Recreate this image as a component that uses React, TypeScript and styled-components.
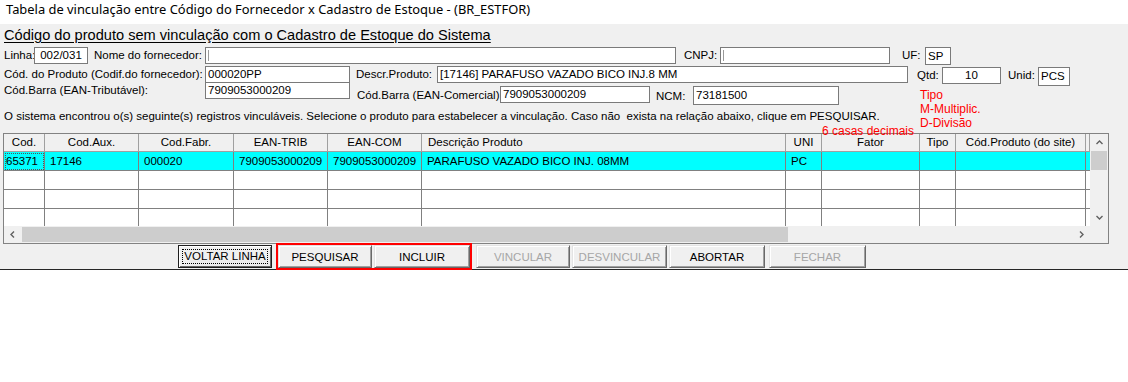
import styled, { createGlobalStyle } from 'styled-components';

const GlobalStyle = createGlobalStyle`
  html, body {
    margin: 0;
    padding: 0;
    background: #ffffff;
  }
  body {
    font-family: "Liberation Sans", Arial, sans-serif;
    color: #000;
  }
`;

const Window = styled.div`
  width: 1128px;
  display: flex;
  flex-direction: column;
`;

const TitleBar = styled.div`
  height: 24px;
  padding-left: 6px;
  font-family: "Noto Sans", "Liberation Sans", sans-serif;
  font-size: 12.9px;
  line-height: 19px;
  background: #ffffff;
`;

const Panel = styled.div`
  position: relative;
  height: 245px;
  background: #f0f0f0;
  border-bottom: 1px solid #262626;
  display: flex;
  flex-direction: column;
  padding-left: 4px;
`;

const Heading = styled.div`
  margin-top: 3px;
  height: 17px;
  font-size: 14.6px;
  line-height: 17px;
  text-decoration: underline;
  text-underline-offset: 2px;
`;

const Row = styled.div<{ $mt: number; $h: number }>`
  display: flex;
  align-items: flex-start;
  margin-top: ${p => p.$mt}px;
  height: ${p => p.$h}px;
`;

const Label = styled.span<{ $w: number; $ml?: number; $dy?: number; $h?: number }>`
  width: ${p => p.$w}px;
  margin-left: ${p => p.$ml ?? 0}px;
  margin-top: ${p => p.$dy ?? 0}px;
  height: ${p => p.$h ?? 17}px;
  line-height: ${p => p.$h ?? 17}px;
  font-size: 11.5px;
  white-space: nowrap;
  flex-shrink: 0;
`;

const Input = styled.div<{ $w: number; $h?: number; $dy?: number; $center?: boolean }>`
  box-sizing: border-box;
  width: ${p => p.$w}px;
  height: ${p => p.$h ?? 17}px;
  margin-top: ${p => p.$dy ?? 0}px;
  border: 1px solid #7a7a7a;
  background: #ffffff;
  padding: 0 2px;
  font-size: 11.5px;
  line-height: ${p => (p.$h ?? 17) - 2}px;
  text-align: ${p => (p.$center ? 'center' : 'left')};
  white-space: nowrap;
  overflow: hidden;
  flex-shrink: 0;
  display: flex;
  align-items: center;
  justify-content: ${p => (p.$center ? 'center' : 'flex-start')};
`;

const Caret = styled.span`
  width: 1px;
  height: 11px;
  background: #9a9a9a;
`;

const Info = styled.div`
  margin-top: 4px;
  height: 14px;
  font-size: 11.5px;
  line-height: 14px;
  white-space: pre;
`;

const RedNote = styled.div`
  position: absolute;
  color: #ff0000;
  font-size: 12px;
  line-height: 14px;
  white-space: nowrap;
`;

const TableFrame = styled.div`
  margin-top: 10px;
  margin-left: -1px;
  width: 1106px;
  box-sizing: border-box;
  border: 1px solid #828282;
  background: #f0f0f0;
  display: flex;
  flex-direction: column;
`;

const TopPart = styled.div`
  display: flex;
  height: 92px;
`;

const GridArea = styled.div`
  width: 1086px;
  display: flex;
  flex-direction: column;
  overflow: hidden;
`;

const COLS = '41px 94px 95px 94px 94px 364px 36px 98px 36px 130px 4px';

const HeaderRow = styled.div`
  display: grid;
  grid-template-columns: ${COLS};
  height: 18px;
  flex-shrink: 0;
`;

const HeadCell = styled.div<{ $left?: boolean }>`
  box-sizing: border-box;
  border-right: 1px solid #a0a0a0;
  border-bottom: 1px solid #a0a0a0;
  background: #f0f0f0;
  font-size: 11.5px;
  line-height: 17px;
  text-align: ${p => (p.$left ? 'left' : 'center')};
  padding-left: ${p => (p.$left ? 6 : 0)}px;
  white-space: nowrap;
  overflow: hidden;
`;

const Body = styled.div`
  height: 74px;
  background: #ffffff;
  overflow: hidden;
`;

const BodyRow = styled.div<{ $selected?: boolean }>`
  display: grid;
  grid-template-columns: ${COLS};
  height: 19px;
  background: ${p => (p.$selected ? '#00ffff' : '#ffffff')};
`;

const Cell = styled.div<{ $focus?: boolean }>`
  box-sizing: border-box;
  border-right: 1px solid #808080;
  border-bottom: 1px solid #808080;
  font-size: 11.5px;
  line-height: 18px;
  padding-left: ${p => (p.$focus ? 2 : 5)}px;
  white-space: nowrap;
  overflow: hidden;
  outline: ${p => (p.$focus ? '1px dotted #555' : 'none')};
  outline-offset: -2px;
`;

const VScroll = styled.div`
  width: 18px;
  display: flex;
  flex-direction: column;
  background: #f0f0f0;
`;

const ArrowBox = styled.div<{ $w: number; $h: number }>`
  width: ${p => p.$w}px;
  height: ${p => p.$h}px;
  display: flex;
  align-items: center;
  justify-content: center;
  flex-shrink: 0;
`;

const VThumb = styled.div`
  height: 19px;
  background: #cdcdcd;
  margin: 0 1px;
`;

const Spacer = styled.div`
  flex: 1;
`;

const BottomPart = styled.div`
  display: flex;
  height: 17px;
`;

const HScroll = styled.div`
  width: 1086px;
  display: flex;
  align-items: stretch;
  background: #f0f0f0;
`;

const HThumb = styled.div`
  width: 766px;
  margin: 1px 0 1px 1px;
  background: #cdcdcd;
`;

const ButtonBar = styled.div`
  display: flex;
  margin-top: 1px;
  padding-left: 174px;
  height: 23px;
`;

const Button = styled.div<{ $w: number; $ml?: number; $disabled?: boolean; $default?: boolean }>`
  box-sizing: border-box;
  width: ${p => p.$w}px;
  height: 23px;
  margin-left: ${p => p.$ml ?? 0}px;
  background: #f0f0f0;
  border: 1px solid;
  border-color: ${p => (p.$default ? '#1e1e1e' : '#e3e3e3 #696969 #696969 #e3e3e3')};
  box-shadow: ${p =>
    p.$default
      ? 'inset 1px 1px #ffffff, inset -1px -1px #696969'
      : 'inset 1px 1px #ffffff, inset -1px -1px #a0a0a0'};
  display: flex;
  align-items: center;
  justify-content: center;
  font-size: 11.5px;
  color: ${p => (p.$disabled ? '#a6a6a6' : '#000000')};
`;

const FocusText = styled.span`
  border: 1px dotted #000;
  padding: 0 1px;
  line-height: 13px;
`;

const RedFrame = styled.div`
  position: relative;
  z-index: 1;
  display: flex;
  gap: 2px;
  margin-left: 6px;
  outline: 2px solid #ff0000;
  outline-offset: 0px;
`;

function Chevron({ dir }: { dir: 'up' | 'down' | 'left' | 'right' }) {
  const rot = { up: 0, right: 90, down: 180, left: 270 }[dir];
  return (
    <svg width="9" height="9" viewBox="0 0 9 9">
      <path
        d="M1.5 6 L4.5 3 L7.5 6"
        fill="none"
        stroke="#606060"
        strokeWidth="1.4"
        transform={`rotate(${rot} 4.5 4.5)`}
      />
    </svg>
  );
}

const headers = [
  'Cod.',
  'Cod.Aux.',
  'Cod.Fabr.',
  'EAN-TRIB',
  'EAN-COM',
  'Descrição Produto',
  'UNI',
  'Fator',
  'Tipo',
  'Cód.Produto (do site)',
  '',
];

const dataRow = [
  '65371',
  '17146',
  '000020',
  '7909053000209',
  '7909053000209',
  'PARAFUSO VAZADO BICO INJ. 08MM',
  'PC',
  '',
  '',
  '',
  '',
];

export default function App() {
  return (
    <Window>
      <GlobalStyle />
      <TitleBar>Tabela de vinculação entre Código do Fornecedor x Cadastro de Estoque - (BR_ESTFOR)</TitleBar>
      <Panel>
        <Heading>Código do produto sem vinculação com o Cadastro de Estoque do Sistema</Heading>

        <Row $mt={3} $h={17}>
          <Label $w={30}>Linha:</Label>
          <Input $w={54} $center>002/031</Input>
          <Label $w={111} $ml={6}>Nome do fornecedor:</Label>
          <Input $w={471}><Caret /></Input>
          <Label $w={36} $ml={8}>CNPJ:</Label>
          <Input $w={170}><Caret /></Input>
          <Label $w={23} $ml={12}>UF:</Label>
          <Input $w={26} $h={18}>SP</Input>
        </Row>

        <Row $mt={2} $h={17}>
          <Label $w={201}>Cód. do Produto (Codif.do fornecedor):</Label>
          <Input $w={145}>000020PP</Input>
          <Label $w={81} $ml={6}>Descr.Produto:</Label>
          <Input $w={471}>[17146] PARAFUSO VAZADO BICO INJ.8 MM</Input>
          <Label $w={25} $ml={9} $dy={1}>Qtd:</Label>
          <Input $w={59} $dy={1} $center>10</Input>
          <Label $w={30} $ml={7} $dy={1}>Unid:</Label>
          <Input $w={32} $h={19} $dy={1}>PCS</Input>
        </Row>

        <Row $mt={-1} $h={23}>
          <Label $w={201}>Cód.Barra (EAN-Tributável):</Label>
          <Input $w={145}>7909053000209</Input>
          <Label $w={143} $ml={7} $dy={5}>Cód.Barra (EAN-Comercial):</Label>
          <Input $w={150} $dy={4}>7909053000209</Input>
          <Label $w={37} $ml={6} $dy={6}>NCM:</Label>
          <Input $w={146} $h={19} $dy={4}>73181500</Input>
        </Row>

        <Info>O sistema encontrou o(s) seguinte(s) registros vinculáveis. Selecione o produto para estabelecer a vinculação. Caso não  exista na relação abaixo, clique em PESQUISAR.</Info>

        <TableFrame>
          <TopPart>
            <GridArea>
              <HeaderRow>
                {headers.map((h, i) => (
                  <HeadCell key={`h-${i}`} $left={i === 5}>{h}</HeadCell>
                ))}
              </HeaderRow>
              <Body>
                <BodyRow $selected>
                  {dataRow.map((d, i) => (
                    <Cell key={`d-${i}`} $focus={i === 0}>{d}</Cell>
                  ))}
                </BodyRow>
                {[1, 2, 3].map(r => (
                  <BodyRow key={`r-${r}`}>
                    {headers.map((_, i) => (
                      <Cell key={`c-${r}-${i}`} />
                    ))}
                  </BodyRow>
                ))}
              </Body>
            </GridArea>
            <VScroll>
              <ArrowBox $w={18} $h={17}><Chevron dir="up" /></ArrowBox>
              <VThumb />
              <Spacer />
              <ArrowBox $w={18} $h={17}><Chevron dir="down" /></ArrowBox>
            </VScroll>
          </TopPart>
          <BottomPart>
            <HScroll>
              <ArrowBox $w={17} $h={17}><Chevron dir="left" /></ArrowBox>
              <HThumb />
              <Spacer />
              <ArrowBox $w={17} $h={17}><Chevron dir="right" /></ArrowBox>
            </HScroll>
          </BottomPart>
        </TableFrame>

        <ButtonBar>
          <Button $w={94} $default><FocusText>VOLTAR LINHA</FocusText></Button>
          <RedFrame>
            <Button $w={94}>PESQUISAR</Button>
            <Button $w={96}>INCLUIR</Button>
          </RedFrame>
          <Button $w={94} $ml={6} $disabled>VINCULAR</Button>
          <Button $w={95} $ml={2} $disabled>DESVINCULAR</Button>
          <Button $w={96} $ml={2}>ABORTAR</Button>
          <Button $w={97} $ml={4} $disabled>FECHAR</Button>
        </ButtonBar>

        <RedNote style={{ left: 920, top: 64 }}>
          Tipo<br />M-Multiplic.<br />D-Divisão
        </RedNote>
        <RedNote style={{ left: 822, top: 100 }}>6 casas decimais</RedNote>
      </Panel>
    </Window>
  );
}
